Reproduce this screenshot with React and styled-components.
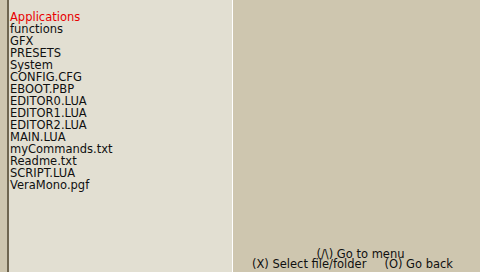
import React from "react";
import styled, { createGlobalStyle } from "styled-components";

const files = [
  "Applications",
  "functions",
  "GFX",
  "PRESETS",
  "System",
  "CONFIG.CFG",
  "EBOOT.PBP",
  "EDITOR0.LUA",
  "EDITOR1.LUA",
  "EDITOR2.LUA",
  "MAIN.LUA",
  "myCommands.txt",
  "Readme.txt",
  "SCRIPT.LUA",
  "VeraMono.pgf",
];

const GlobalStyle = createGlobalStyle`
  html, body {
    margin: 0;
    padding: 0;
    width: 480px;
    height: 272px;
    overflow: hidden;
    background: #cec6af;
  }
`;

const Screen = styled.div`
  display: flex;
  width: 480px;
  height: 272px;
  font-family: "DejaVu Sans", sans-serif;
  font-size: 11.5px;
  color: #101010;
`;

const Strip = styled.div`
  width: 7px;
  background: #cec6af;
  border-right: 2px solid #6f6650;
`;

const Browser = styled.div`
  width: 222px;
  padding: 11px 0 0 1px;
  background: #e2dfd2;
  border-right: 1px solid #ffffff;
`;

const Entry = styled.div`
  height: 12px;
  line-height: 12px;
  white-space: nowrap;
  color: ${(p) => (p.selected ? "#e80000" : "#101010")};
`;

const Help = styled.div`
  flex: 1;
  display: flex;
  flex-direction: column;
  justify-content: flex-end;
  align-items: center;
  padding-bottom: 3px;
  background: #cec6af;
`;

const HelpLine = styled.div`
  display: flex;
  gap: 18px;
  height: 10px;
  line-height: 10px;
  white-space: nowrap;
  padding-left: ${(p) => p.shift || 0}px;
  padding-right: ${(p) => p.pull || 0}px;
`;

export default function App() {
  return (
    <>
      <GlobalStyle />
      <Screen>
        <Strip />
        <Browser>
          {files.map((name, i) => (
            <Entry key={name} selected={i === 0}>
              {name}
            </Entry>
          ))}
        </Browser>
        <Help>
          <HelpLine shift={8}>(/\) Go to menu</HelpLine>
          <HelpLine pull={8}>
            <span>(X) Select file/folder</span>
            <span>(O) Go back</span>
          </HelpLine>
        </Help>
      </Screen>
    </>
  );
}
